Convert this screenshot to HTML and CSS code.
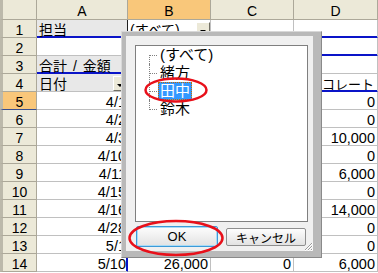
FILE: index.html
```html
<!DOCTYPE html>
<html lang="ja">
<head>
    <meta charset="UTF-8">
    <title>ピボットテーブル - 担当</title>
    <link rel="stylesheet" href="styles.css">
</head>
<body>
    <div class="sheet">
        <div class="grid">
            <div class="hd corner"></div>
            <div class="hd">A</div>
            <div class="hd sel">B</div>
            <div class="hd">C</div>
            <div class="hd">D</div>

            <div class="rh">1</div>
            <div class="c jp field pb edge">担当</div>
            <div class="c jp drop pb"><span>(すべて)</span><i class="dd"></i></div>
            <div class="c pb"></div>
            <div class="c pb"></div>

            <div class="rh">2</div>
            <div class="c"></div>
            <div class="c pb"></div>
            <div class="c pb"></div>
            <div class="c pb"></div>

            <div class="rh">3</div>
            <div class="c jp field pb">合計 / 金額</div>
            <div class="c jp drop field"><span>商品</span><i class="dd"></i></div>
            <div class="c"></div>
            <div class="c"></div>

            <div class="rh">4</div>
            <div class="c jp drop field"><span>日付</span><i class="dd"></i></div>
            <div class="c jp-s pb">キャンディ</div>
            <div class="c jp-s pb">クッキー</div>
            <div class="c jp-s pb">チョコレート</div>

            <div class="rh sel">5</div>
            <div class="c num pr">4/1</div>
            <div class="c num">12,000</div>
            <div class="c num">5,000</div>
            <div class="c num">0</div>

            <div class="rh">6</div>
            <div class="c num pr">4/2</div>
            <div class="c num">8,000</div>
            <div class="c num">0</div>
            <div class="c num">0</div>

            <div class="rh">7</div>
            <div class="c num pr">4/3</div>
            <div class="c num">0</div>
            <div class="c num">3,000</div>
            <div class="c num">10,000</div>

            <div class="rh">8</div>
            <div class="c num pr">4/10</div>
            <div class="c num">15,000</div>
            <div class="c num">0</div>
            <div class="c num">0</div>

            <div class="rh">9</div>
            <div class="c num pr">4/11</div>
            <div class="c num">0</div>
            <div class="c num">4,000</div>
            <div class="c num">6,000</div>

            <div class="rh">10</div>
            <div class="c num pr">4/15</div>
            <div class="c num">9,000</div>
            <div class="c num">0</div>
            <div class="c num">0</div>

            <div class="rh">11</div>
            <div class="c num pr">4/16</div>
            <div class="c num">0</div>
            <div class="c num">6,000</div>
            <div class="c num">14,000</div>

            <div class="rh">12</div>
            <div class="c num pr">4/28</div>
            <div class="c num">11,000</div>
            <div class="c num">0</div>
            <div class="c num">0</div>

            <div class="rh">13</div>
            <div class="c num pr">5/1</div>
            <div class="c num">7,000</div>
            <div class="c num">0</div>
            <div class="c num">0</div>

            <div class="rh">14</div>
            <div class="c num pr">5/10</div>
            <div class="c num">26,000</div>
            <div class="c num">0</div>
            <div class="c num">6,000</div>
        </div>

        <!-- page field dropdown -->
        <div class="popup">
            <div class="popup-body">
                <div class="list">
                    <ul class="tree">
                        <li><span>(すべて)</span></li>
                        <li><span>緒方</span></li>
                        <li class="on"><span>田中</span></li>
                        <li><span>鈴木</span></li>
                    </ul>
                </div>
                <div class="popup-buttons">
                    <button class="btn btn-default">OK</button>
                    <button class="btn">キャンセル</button>
                </div>
                <svg class="grip" width="9" height="9" viewBox="0 0 9 9">
                    <path d="M8 1L1 8M8 4L4 8M8 7L7 8" stroke="#9a9a9a" stroke-width="1"/>
                    <path d="M9 1L1 9M9 4L4 9M9 7L7 9" stroke="#ffffff" stroke-width="1"/>
                </svg>
            </div>
        </div>

        <!-- red marks -->
        <svg class="mark mark-item" width="66" height="28">
            <ellipse cx="33" cy="14" rx="30.5" ry="11.5"/>
        </svg>
        <svg class="mark mark-ok" width="100" height="40">
            <ellipse cx="50" cy="20" rx="46.5" ry="17"/>
        </svg>
    </div>
</body>
</html>
```

FILE: styles.css
```css
:root {
    --grid-line: #c0c0c0;
    --head-bg: #ece9d8;
    --head-line: #aca899;
    --head-sel: #f9c77a;
    --pivot: #0a14c8;
    --field-bg: #e8e8e8;
    --mark: #e8101a;
}

body {
    margin: 0;
    font-family: "Liberation Sans", "Noto Sans CJK JP", sans-serif;
    font-size: 14px;
    color: #000;
    background: #fff;
}

.sheet {
    position: relative;
    width: 378px;
    height: 273px;
    overflow: hidden;
}

.grid {
    display: grid;
    grid-template-columns: 37px 91px 83px 83px 84px;
    grid-template-rows: 20px repeat(14, 18px);
}

/* headers */
.hd,
.rh {
    box-sizing: border-box;
    background: var(--head-bg);
    border-right: 1px solid var(--head-line);
    border-bottom: 1px solid var(--head-line);
    text-align: center;
    line-height: 13px;
}

.hd {
    padding-top: 5px;
}

.rh {
    padding-top: 4px;
    border-left: 3px solid #bcb9ab;
}

.corner {
    border-left: 3px solid #bcb9ab;
}

.hd.sel,
.rh.sel {
    background: var(--head-sel);
}

.rh.sel {
    border-bottom-color: #3b4f8c;
}

/* cells */
.c {
    box-sizing: border-box;
    border-right: 1px solid var(--grid-line);
    border-bottom: 1px solid var(--grid-line);
    padding: 4px 2px 0;
    line-height: 13px;
    white-space: nowrap;
    overflow: hidden;
}

.jp {
    font-size: 14px;
    word-spacing: 2px;
}

.jp-s {
    font-size: 13px;
}

.num {
    text-align: right;
    font-size: 14.5px;
}

.field {
    background: var(--field-bg);
}

.edge {
    border-right-color: #202020;
}

/* pivot outline */
.pb {
    border-bottom-color: var(--pivot);
    box-shadow: inset 0 -1px var(--pivot);
}

.pr {
    border-right-color: var(--pivot);
    box-shadow: inset -1px 0 var(--pivot);
    padding-right: 1px;
}

.drop {
    display: flex;
    justify-content: space-between;
    align-items: flex-start;
    padding: 0 0 0 2px;
}

.drop span {
    padding-top: 4px;
}

.dd {
    box-sizing: border-box;
    width: 14px;
    height: 15px;
    margin-top: 2px;
    background: var(--head-bg);
    border: 1px solid;
    border-color: #fff #716f64 #716f64 #fff;
    position: relative;
}

.dd::after {
    content: '';
    position: absolute;
    left: 3px;
    bottom: 3px;
    border-left: 3px solid transparent;
    border-right: 3px solid transparent;
    border-top: 3px solid #000;
}

/* dropdown popup */
.popup {
    position: absolute;
    left: 121px;
    top: 31px;
    width: 201px;
    height: 227px;
    box-sizing: border-box;
    padding: 4px 8px 6px 4px;
    background: #b9b9b9;
    border: 1px solid;
    border-color: #d8d8d8 #8a8a8a #8a8a8a #d8d8d8;
}

.popup-body {
    position: relative;
    height: 100%;
    box-sizing: border-box;
    padding: 9px 5px 0 9px;
    background: #f0f0f0;
}

.list {
    height: 177px;
    box-sizing: border-box;
    border: 1px solid #7f7f7f;
    background: #fff;
    font-size: 15px;
}

.tree {
    list-style: none;
    margin: 0;
    padding: 0 0 0 13px;
}

.tree li {
    position: relative;
    height: 18px;
    padding-left: 9px;
}

.tree li::before {
    content: '';
    position: absolute;
    left: 0;
    top: 9px;
    width: 8px;
    border-top: 1px dotted #808080;
}

.tree li::after {
    content: '';
    position: absolute;
    left: 0;
    top: 0;
    height: 18px;
    border-left: 1px dotted #808080;
}

.tree li:first-child::after {
    top: 9px;
    height: 9px;
}

.tree li:last-child::after {
    height: 10px;
}

.tree span {
    display: inline-block;
    box-sizing: border-box;
    height: 18px;
    padding: 0 2px;
    line-height: 18px;
}

.tree li.on span {
    background: #3399ff;
    color: #fff;
    outline: 1px dotted #c66a00;
    outline-offset: -1px;
}

.popup-buttons {
    display: flex;
    align-items: center;
    gap: 8px;
    margin-top: 4px;
    padding-left: 1px;
}

.btn {
    box-sizing: border-box;
    width: 80px;
    height: 18px;
    padding: 0;
    font-family: "Liberation Sans", "Noto Sans CJK JP", sans-serif;
    font-size: 12px;
    color: #000;
    background: linear-gradient(#fdfdfd, #e2e2e2);
    border: 1px solid #8e8e8e;
    border-radius: 2px;
}

.btn-default {
    width: 82px;
    height: 21px;
    font-size: 13px;
    border-color: #3c9ad8;
    box-shadow: inset 0 0 0 1px #a9dbf6;
}

.grip {
    position: absolute;
    right: 0;
    bottom: 0;
}

/* annotation ellipses */
.mark {
    position: absolute;
    fill: none;
    stroke: var(--mark);
    stroke-width: 2.5;
}

.mark-item {
    left: 143px;
    top: 76px;
}

.mark-ok {
    left: 126px;
    top: 218px;
}
```
